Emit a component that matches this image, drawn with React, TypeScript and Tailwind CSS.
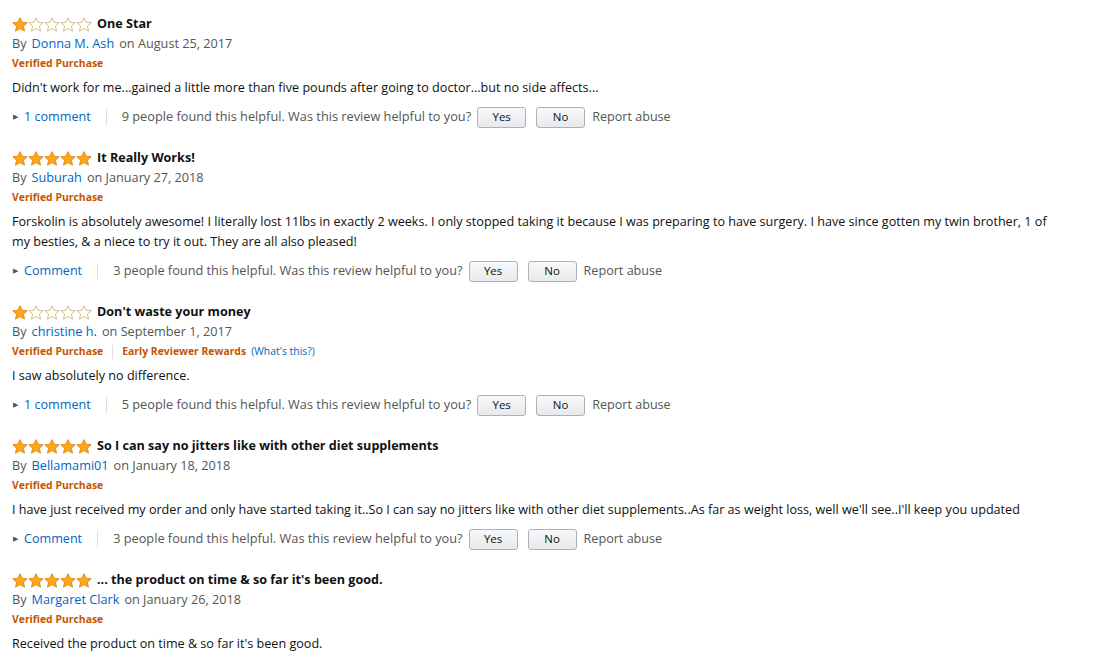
import React from "react";

type Review = {
  stars: number;
  title: string;
  author: string;
  date: string;
  body: string;
  comments?: string;
  helpful?: number;
  early?: boolean;
};

const reviews: Review[] = [
  {
    stars: 1,
    title: "One Star",
    author: "Donna M. Ash",
    date: "August 25, 2017",
    body: "Didn't work for me...gained a little more than five pounds after going to doctor...but no side affects...",
    comments: "1 comment",
    helpful: 9,
  },
  {
    stars: 5,
    title: "It Really Works!",
    author: "Suburah",
    date: "January 27, 2018",
    body: "Forskolin is absolutely awesome! I literally lost 11lbs in exactly 2 weeks. I only stopped taking it because I was preparing to have surgery. I have since gotten my twin brother, 1 of my besties, & a niece to try it out. They are all also pleased!",
    comments: "Comment",
    helpful: 3,
  },
  {
    stars: 1,
    title: "Don't waste your money",
    author: "christine h.",
    date: "September 1, 2017",
    body: "I saw absolutely no difference.",
    comments: "1 comment",
    helpful: 5,
    early: true,
  },
  {
    stars: 5,
    title: "So I can say no jitters like with other diet supplements",
    author: "Bellamami01",
    date: "January 18, 2018",
    body: "I have just received my order and only have started taking it..So I can say no jitters like with other diet supplements..As far as weight loss, well we'll see..I'll keep you updated",
    comments: "Comment",
    helpful: 3,
  },
  {
    stars: 5,
    title: "... the product on time & so far it's been good.",
    author: "Margaret Clark",
    date: "January 26, 2018",
    body: "Received the product on time & so far it's been good.",
  },
];

const Star = ({ filled }: { filled: boolean }) => (
  <svg width="16" height="15" viewBox="0 0 16 15" className="block">
    <path
      d="M8 0.7 L10.2 5.3 L15.2 5.8 L11.4 9.2 L12.5 14.2 L8 11.6 L3.5 14.2 L4.6 9.2 L0.8 5.8 L5.8 5.3 Z"
      fill={filled ? "#ffa41c" : "#ffffff"}
      stroke={filled ? "#d88c0f" : "#d1b27a"}
      strokeWidth="0.9"
      strokeLinejoin="round"
    />
  </svg>
);

const Stars = ({ n }: { n: number }) => (
  <div className="flex">
    {[1, 2, 3, 4, 5].map((i) => (
      <Star key={i} filled={i <= n} />
    ))}
  </div>
);

const Btn = ({ label }: { label: string }) => (
  <button className="w-[49px] h-[21px] rounded-[3px] border border-[#adb1b8] bg-gradient-to-b from-[#f7f8fa] to-[#e7e9ec] text-[11.5px] text-[#111] leading-none">
    {label}
  </button>
);

const ReviewItem = ({ r }: { r: Review }) => (
  <div className="flex flex-col">
    <div className="flex items-center gap-[5px] h-[20px]">
      <Stars n={r.stars} />
      <span className="font-bold text-[12.6px] text-[#111]">{r.title}</span>
    </div>
    <div className="h-[20px] flex items-center text-[12.7px] text-[#555]">
      By<a className="ml-[5px] mr-[5px] text-[#0066c0]">{r.author}</a>on {r.date}
    </div>
    <div className="h-[20px] flex items-center text-[10.4px] font-bold">
      <span className="text-[#c45500]">Verified Purchase</span>
      {r.early && (
        <>
          <span className="mx-[9px] h-[14px] w-px bg-[#ddd]" />
          <span className="text-[#c45500]">Early Reviewer Rewards</span>
          <span className="ml-[5px] font-normal text-[#0066c0]">(What's this?)</span>
        </>
      )}
    </div>
    <p className="mt-[4px] text-[12.6px] leading-[20px] text-[#111] max-w-[1040px]">{r.body}</p>
    {r.comments && (
      <div className="mt-[8px] h-[22px] flex items-center text-[12.6px]">
        <span className="text-[#555] text-[7px] ml-[1px] mr-[6px]">▶</span>
        <a className="text-[#0066c0]">{r.comments}</a>
        <span className="mx-[15px] h-[16px] w-px bg-[#ddd]" />
        <span className="text-[#555] text-[12.75px]">
          {r.helpful} people found this helpful. Was this review helpful to you?
        </span>
        <div className="ml-[6px] flex gap-[10px]">
          <Btn label="Yes" />
          <Btn label="No" />
        </div>
        <a className="ml-[7px] text-[#555]">Report abuse</a>
      </div>
    )}
  </div>
);

export default function App() {
  return (
    <div
      className="bg-white min-h-screen pl-[12px] pt-[14px] flex flex-col gap-[20px]"
      style={{ fontFamily: "'Open Sans', Arial, sans-serif" }}
    >
      {reviews.map((r, i) => (
        <ReviewItem key={i} r={r} />
      ))}
    </div>
  );
}
